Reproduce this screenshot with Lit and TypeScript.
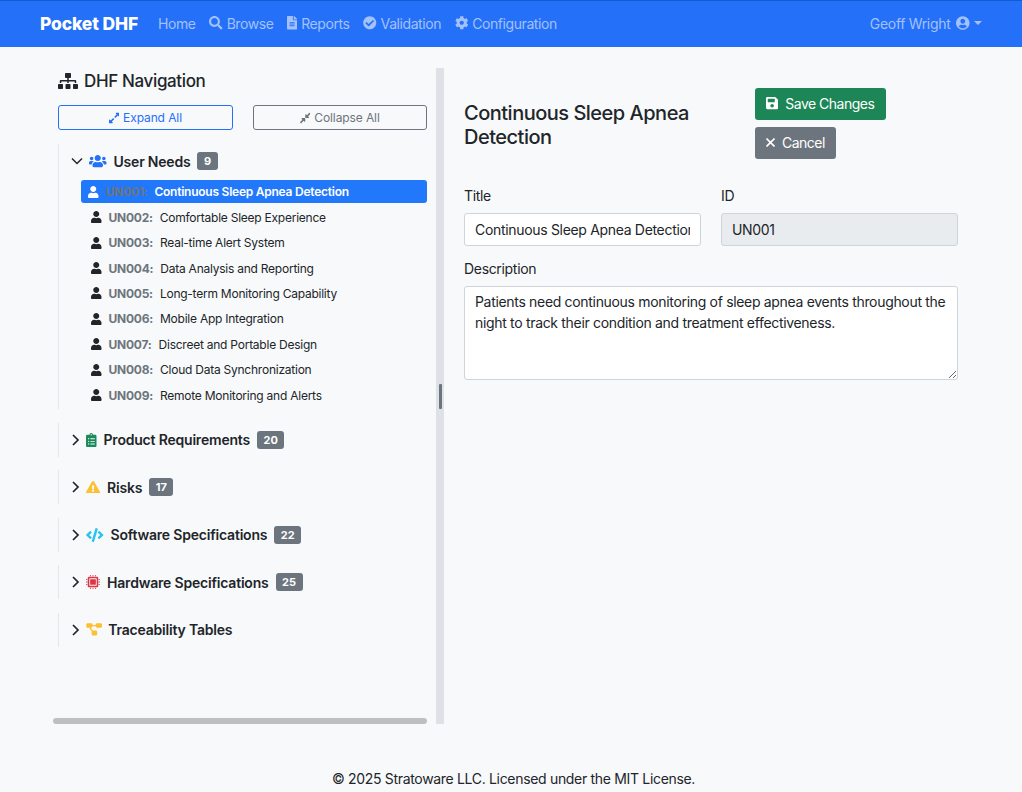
import { LitElement, html, css } from "lit";
import { customElement } from "lit/decorators.js";

type Ic = [number, string];
const I: Record<string, Ic> = {
  search: [512, "M505 442.7L405.3 343c-4.5-4.5-10.6-7-17-7H372c27.6-35.3 44-79.7 44-128C416 93.1 322.9 0 208 0S0 93.1 0 208s93.1 208 208 208c48.3 0 92.7-16.4 128-44v16.3c0 6.4 2.5 12.5 7 17l99.7 99.7c9.4 9.4 24.6 9.4 33.9 0l28.3-28.3c9.4-9.4 9.4-24.6.1-34zM208 336c-70.7 0-128-57.2-128-128 0-70.7 57.2-128 128-128 70.7 0 128 57.2 128 128 0 70.7-57.2 128-128 128z"],
  file: [384, "M224 136V0H24C10.7 0 0 10.7 0 24v464c0 13.3 10.7 24 24 24h336c13.3 0 24-10.7 24-24V160H248c-13.2 0-24-10.8-24-24zm64 236c0 6.6-5.4 12-12 12H108c-6.6 0-12-5.4-12-12v-8c0-6.6 5.4-12 12-12h168c6.6 0 12 5.4 12 12v8zm0-64c0 6.6-5.4 12-12 12H108c-6.6 0-12-5.4-12-12v-8c0-6.6 5.4-12 12-12h168c6.6 0 12 5.4 12 12v8zm0-72v8c0 6.6-5.4 12-12 12H108c-6.6 0-12-5.4-12-12v-8c0-6.6 5.4-12 12-12h168c6.6 0 12 5.4 12 12zm96-114.1v6.1H256V0h6.1c6.4 0 12.5 2.5 17 7l97.9 98c4.5 4.5 7 10.6 7 16.9z"],
  check: [512, "M504 256c0 136.967-111.033 248-248 248S8 392.967 8 256 119.033 8 256 8s248 111.033 248 248zM227.314 387.314l184-184c6.248-6.248 6.248-16.379 0-22.627l-22.627-22.627c-6.248-6.249-16.379-6.249-22.628 0L216 308.118l-70.059-70.059c-6.248-6.248-16.379-6.248-22.628 0l-22.627 22.627c-6.248 6.248-6.248 16.379 0 22.627l104 104c6.249 6.249 16.379 6.249 22.628.001z"],
  cog: [512, "M487.4 315.7l-42.6-24.6c4.3-23.2 4.3-47 0-70.2l42.6-24.6c4.9-2.8 7.1-8.6 5.5-14-11.1-35.6-30-67.8-54.7-94.6-3.8-4.1-10-5.1-14.8-2.3L380.8 110c-17.9-15.4-38.5-27.3-60.8-35.1V25.8c0-5.6-3.9-10.5-9.4-11.7-36.7-8.2-74.3-7.8-109.2 0-5.5 1.2-9.4 6.1-9.4 11.7V75c-22.2 7.9-42.8 19.8-60.8 35.1L88.7 85.5c-4.9-2.8-11-1.9-14.8 2.3-24.7 26.7-43.6 58.9-54.7 94.6-1.7 5.4.6 11.2 5.5 14L67.3 221c-4.3 23.2-4.3 47 0 70.2l-42.6 24.6c-4.9 2.8-7.1 8.6-5.5 14 11.1 35.6 30 67.8 54.7 94.6 3.8 4.1 10 5.1 14.8 2.3l42.6-24.6c17.9 15.4 38.5 27.3 60.8 35.1v49.2c0 5.6 3.9 10.5 9.4 11.7 36.7 8.2 74.3 7.8 109.2 0 5.5-1.2 9.4-6.1 9.4-11.7v-49.2c22.2-7.9 42.8-19.8 60.8-35.1l42.6 24.6c4.9 2.8 11 1.9 14.8-2.3 24.7-26.7 43.6-58.9 54.7-94.6 1.5-5.5-.7-11.3-5.6-14.1zM256 336c-44.1 0-80-35.9-80-80s35.9-80 80-80 80 35.9 80 80-35.9 80-80 80z"],
  usercircle: [496, "M248 8C111 8 0 119 0 256s111 248 248 248 248-111 248-248S385 8 248 8zm0 96c48.6 0 88 39.4 88 88s-39.4 88-88 88-88-39.4-88-88 39.4-88 88-88zm0 344c-58.7 0-111.3-26.6-146.5-68.2 18.8-35.4 55.6-59.8 98.5-59.8 2.4 0 4.8.4 7.1 1.1 13 4.2 26.6 6.9 40.9 6.9 14.3 0 28-2.7 40.9-6.9 2.3-.7 4.7-1.1 7.1-1.1 42.9 0 79.7 24.4 98.5 59.8C359.3 421.4 306.7 448 248 448z"],
  sitemap: [640, "M128 352H32c-17.67 0-32 14.33-32 32v96c0 17.67 14.33 32 32 32h96c17.67 0 32-14.33 32-32v-96c0-17.67-14.33-32-32-32zm-24-80h192v48h48v-48h192v48h48v-57.59c0-21.17-17.23-38.41-38.41-38.41H344v-64h40c17.67 0 32-14.33 32-32V32c0-17.67-14.33-32-32-32H256c-17.67 0-32 14.33-32 32v96c0 17.67 14.33 32 32 32h40v64H94.41C73.23 224 56 241.23 56 262.41V320h48v-48zm264 80h-96c-17.67 0-32 14.33-32 32v96c0 17.67 14.33 32 32 32h96c17.67 0 32-14.33 32-32v-96c0-17.67-14.33-32-32-32zm240 0h-96c-17.67 0-32 14.33-32 32v96c0 17.67 14.33 32 32 32h96c17.67 0 32-14.33 32-32v-96c0-17.67-14.33-32-32-32z"],
  expand: [448, "M212.686 315.314L120 408l32.922 31.029c15.12 15.12 4.412 40.971-16.97 40.971h-112C10.697 480 0 469.255 0 456V344c0-21.382 25.803-32.09 40.922-16.971L72 360l92.686-92.686c6.249-6.248 16.379-6.248 22.627 0l25.373 25.373c6.249 6.248 6.249 16.378 0 22.627zm22.628-118.628L328 104l-32.922-31.029C279.958 57.851 290.666 32 312.048 32h112C437.303 32 448 42.745 448 56v112c0 21.382-25.803 32.09-40.922 16.971L376 152l-92.686 92.686c-6.249 6.248-16.379 6.248-22.627 0l-25.373-25.373c-6.249-6.248-6.249-16.378 0-22.627z"],
  compress: [448, "M4.686 427.314L104 328l-32.922-31.029C55.958 281.851 66.666 256 88.048 256h112C213.303 256 224 266.745 224 280v112c0 21.382-25.803 32.09-40.922 16.971L152 376l-99.314 99.314c-6.248 6.248-16.379 6.248-22.627 0L4.686 449.941c-6.248-6.248-6.248-16.379 0-22.627zM443.314 84.686L344 184l32.922 31.029c15.12 15.12 4.412 40.971-16.97 40.971h-112C234.697 256 224 245.255 224 232V120c0-21.382 25.803-32.09 40.922-16.971L296 136l99.314-99.314c6.248-6.248 16.379-6.248 22.627 0l25.373 25.373c6.248 6.248 6.248 16.379 0 22.627z"],
  users: [640, "M96 224c35.3 0 64-28.7 64-64s-28.7-64-64-64-64 28.7-64 64 28.7 64 64 64zm448 0c35.3 0 64-28.7 64-64s-28.7-64-64-64-64 28.7-64 64 28.7 64 64 64zm32 32h-64c-17.6 0-33.5 7.1-45.1 18.6 40.3 22.1 68.9 62 75.1 109.4h66c17.7 0 32-14.3 32-32v-32c0-35.3-28.7-64-64-64zm-256 0c61.9 0 112-50.1 112-112S381.9 32 320 32 208 82.1 208 144s50.1 112 112 112zm76.8 32h-8.3c-20.8 10-43.9 16-68.5 16s-47.6-6-68.5-16h-8.3C179.6 288 128 339.6 128 403.2V432c0 26.5 21.5 48 48 48h288c26.5 0 48-21.5 48-48v-28.8c0-63.6-51.6-115.2-115.2-115.2zm-223.7-13.4C161.5 263.1 145.6 256 128 256H64c-35.3 0-64 28.7-64 64v32c0 17.7 14.3 32 32 32h65.9c6.3-47.4 34.9-87.3 75.2-109.4z"],
  user: [448, "M224 256c70.7 0 128-57.3 128-128S294.7 0 224 0 96 57.3 96 128s57.3 128 128 128zm89.6 32h-16.7c-22.2 10.2-46.9 16-72.9 16s-50.6-5.8-72.9-16h-16.7C60.2 288 0 348.2 0 422.4V464c0 26.5 21.5 48 48 48h352c26.5 0 48-21.5 48-48v-41.6c0-74.2-60.2-134.4-134.4-134.4z"],
  clipboard: [384, "M336 64h-80c0-35.3-28.7-64-64-64s-64 28.7-64 64H48C21.5 64 0 85.5 0 112v352c0 26.5 21.5 48 48 48h288c26.5 0 48-21.5 48-48V112c0-26.5-21.5-48-48-48zM96 424c-13.3 0-24-10.7-24-24s10.7-24 24-24 24 10.7 24 24-10.7 24-24 24zm0-96c-13.3 0-24-10.7-24-24s10.7-24 24-24 24 10.7 24 24-10.7 24-24 24zm0-96c-13.3 0-24-10.7-24-24s10.7-24 24-24 24 10.7 24 24-10.7 24-24 24zm96-192c13.3 0 24 10.7 24 24s-10.7 24-24 24-24-10.7-24-24 10.7-24 24-24zm128 368c0 4.4-3.6 8-8 8H168c-4.4 0-8-3.6-8-8v-16c0-4.4 3.6-8 8-8h144c4.4 0 8 3.6 8 8v16zm0-96c0 4.4-3.6 8-8 8H168c-4.4 0-8-3.6-8-8v-16c0-4.4 3.6-8 8-8h144c4.4 0 8 3.6 8 8v16zm0-96c0 4.4-3.6 8-8 8H168c-4.4 0-8-3.6-8-8v-16c0-4.4 3.6-8 8-8h144c4.4 0 8 3.6 8 8v16z"],
  warn: [576, "M569.517 440.013C587.975 472.007 564.806 512 527.94 512H48.054c-36.937 0-59.999-40.055-41.577-71.987L246.423 23.985c18.467-32.009 64.72-31.951 83.154 0l239.94 416.028zM288 354c-25.405 0-46 20.595-46 46s20.595 46 46 46 46-20.595 46-46-20.595-46-46-46zm-43.673-165.346l7.418 136c.347 6.364 5.609 11.346 11.982 11.346h48.546c6.373 0 11.635-4.982 11.982-11.346l7.418-136c.375-6.874-5.098-12.654-11.982-12.654h-63.383c-6.884 0-12.356 5.78-11.981 12.654z"],
  code: [640, "M278.9 511.5l-61-17.7c-6.4-1.8-10-8.5-8.2-14.9L346.2 8.7c1.8-6.4 8.5-10 14.9-8.2l61 17.7c6.4 1.8 10 8.5 8.2 14.9L293.8 503.3c-1.9 6.4-8.5 10.1-14.9 8.2zm-114-112.2l43.5-46.4c4.6-4.9 4.3-12.7-.8-17.2L117 256l90.6-79.7c5.1-4.5 5.5-12.3.8-17.2l-43.5-46.4c-4.5-4.8-12.1-5.1-17-.5L3.8 247.2c-5.1 4.7-5.1 12.8 0 17.5l144.1 135.1c4.9 4.6 12.5 4.4 17-.5zm327.2.6l144.1-135.1c5.1-4.7 5.1-12.8 0-17.5L492.1 112.1c-4.8-4.5-12.4-4.3-17 .5L431.6 159c-4.6 4.9-4.3 12.7.8 17.2L523 256l-90.6 79.7c-5.1 4.5-5.5 12.3-.8 17.2l43.5 46.4c4.5 4.9 12.1 5.1 17 .6z"],
  chip: [512, "M112 64h288c26.5 0 48 21.5 48 48v288c0 26.5-21.5 48-48 48H112c-26.5 0-48-21.5-48-48V112c0-26.5 21.5-48 48-48zm28 56c-11 0-20 9-20 20v232c0 11 9 20 20 20h232c11 0 20-9 20-20V140c0-11-9-20-20-20H140zm12 32h208v208H152V152zM144 0h32v48h-32zm96 0h32v48h-32zm96 0h32v48h-32zM144 464h32v48h-32zm96 0h32v48h-32zm96 0h32v48h-32zM0 144h48v32H0zm0 96h48v32H0zm0 96h48v32H0zM464 144h48v32h-48zm0 96h48v32h-48zm0 96h48v32h-48z"],
  diagram: [640, "M70 10h130c35 0 60 25 60 55v10h120v-10c0-30 25-55 60-55h130c35 0 60 25 60 55v65c0 30-25 55-60 55H440c-35 0-60-25-60-55v-5H260v5c0 30-25 55-60 55h-8l66 115h122c35 0 60 25 60 55v85c0 30-25 55-60 55H280c-35 0-60-25-60-55v-85c0-8 2-16 5-23L126 184C100 184 10 190 10 130V65C10 35 35 10 70 10z"],
  save: [448, "M433.941 129.941l-83.882-83.882A48 48 0 0 0 316.118 32H48C21.49 32 0 53.49 0 80v352c0 26.51 21.49 48 48 48h352c26.51 0 48-21.49 48-48V163.882a48 48 0 0 0-14.059-33.941zM224 416c-35.346 0-64-28.654-64-64 0-35.346 28.654-64 64-64s64 28.654 64 64c0 35.346-28.654 64-64 64zm96-304.52V212c0 6.627-5.373 12-12 12H76c-6.627 0-12-5.373-12-12V108c0-6.627 5.373-12 12-12h228.52c3.183 0 6.235 1.264 8.485 3.515l3.48 3.48A11.996 11.996 0 0 1 320 111.48z"],
};

const icon = (name: string, cls = "") => {
  const [w, d] = I[name];
  return html`<svg class="ic ${cls}" viewBox="0 0 ${w} 512" fill="currentColor"><path d=${d}></path></svg>`;
};

const needs: [string, string][] = [
  ["UN001", "Continuous Sleep Apnea Detection"],
  ["UN002", "Comfortable Sleep Experience"],
  ["UN003", "Real-time Alert System"],
  ["UN004", "Data Analysis and Reporting"],
  ["UN005", "Long-term Monitoring Capability"],
  ["UN006", "Mobile App Integration"],
  ["UN007", "Discreet and Portable Design"],
  ["UN008", "Cloud Data Synchronization"],
  ["UN009", "Remote Monitoring and Alerts"],
];

const groups: [string, string, string, string | null][] = [
  ["Product Requirements", "clipboard", "green", "20"],
  ["Risks", "warn", "amber", "17"],
  ["Software Specifications", "code", "cyan", "22"],
  ["Hardware Specifications", "chip", "red", "25"],
  ["Traceability Tables", "diagram", "amber", null],
];

@customElement("app-root")
export class AppRoot extends LitElement {
  static styles = css`
    :host { display: block; min-height: 792px; background: #f8f9fa; color: #212529;
      font-family: Inter, "Noto Sans", sans-serif; font-size: 14px; line-height: 21px; letter-spacing: -0.32px; }
    * { box-sizing: border-box; }
    .ic { height: 14px; width: auto; flex: none; display: block; }
    .warn { height: 12.5px; }
    .diagram { height: 13px; margin-right: -1px; }

    nav { height: 47px; background: #2470f9; border-top: 1px solid #0f5bd6; display: flex; align-items: center;
      padding: 0 40px 2px; color: #a3c1fb; }
    .brand { color: #fff; font-weight: 800; font-size: 17.5px; margin-right: 20px; letter-spacing: -0.15px; }
    .links { display: flex; align-items: center; gap: 13.6px; letter-spacing: -0.42px; }
    .link { display: flex; align-items: center; gap: 4px; }
    .link .ic { height: 13.5px; }
    .user { margin-left: auto; display: flex; align-items: center; gap: 6px; }
    .user .ic { height: 14px; }
    .caret { width: 0; height: 0; border: 4px solid transparent; border-top-color: currentColor; border-bottom: 0; margin-left: -2px; }

    main { display: flex; padding: 21px 64px 0 53px; height: 677px; }
    .side { width: 383px; flex: none; height: 656px; padding: 1px 9px 0 5px; display: flex; flex-direction: column; }
    h2 { margin: 0 0 12px; font-size: 17px; line-height: 24px; font-weight: 500; display: flex; align-items: center; gap: 6px; letter-spacing: -0.36px; }
    h2 .ic { height: 16px; }
    .tools { display: flex; gap: 20px; margin-bottom: 14px; }
    .tool { flex: 1; height: 25px; border: 1px solid; border-radius: 3px; font-size: 12px; display: flex;
      align-items: center; justify-content: center; gap: 4px; letter-spacing: -0.1px; }
    .tool .ic { height: 12px; }
    .tool.p { color: #2470f9; border-color: #2470f9; }
    .tool.s { color: #6c757d; border-color: #6c757d; }

    .group { border-left: 1px solid #e3e6ea; margin-bottom: 13.6px; }
    .head { height: 34px; display: flex; align-items: center; padding-left: 12px; font-weight: 600; gap: 7px; color: #212529; letter-spacing: -0.2px; }
    .chev { width: 12px; height: 12px; flex: none; fill: none; stroke: #212529; stroke-width: 1.5; margin-right: -1px; }
    .chev.closed { width: 9px; margin-right: -1px; stroke-width: 1.7; }
    .blue { color: #2470f9; } .green { color: #1c8a5b; } .amber { color: #fcc030; } .cyan { color: #28c3f0; } .red { color: #dc3545; }
    .badge { background: #6c757d; color: #fff; font-size: 11px; font-weight: 700; line-height: 18px; height: 18px;
      padding: 0 6.5px; border-radius: 3px; letter-spacing: 0; }

    ul { list-style: none; margin: 2.3px 0 0.3px; padding: 0 0 0 22px; }
    li { height: 23px; margin-bottom: 2.42px; display: flex; align-items: center; padding-left: 10px; font-size: 12px; border-radius: 3px; letter-spacing: -0.24px; }
    li .ic { height: 12px; margin-right: 7px; }
    li b { color: #6c757d; font-weight: 700; margin-right: 7px; }
    li.active { background: #2278fb; color: #fff; font-weight: 600; padding-left: 7px; }
    li.active b { color: #6c757d; }

    .hbar { margin-top: auto; height: 6px; width: 374px; margin-left: -5px; border-radius: 3px; background: #bfbfbf; }

    .resizer { width: 8px; height: 656px; flex: none; background: #dee2e6; display: flex; align-items: center; justify-content: center; }
    .grip { width: 3px; height: 25px; background: #6c757d; border-radius: 1px; }

    .content { flex: 1; padding: 20px 0 0 20px; }
    .top { display: flex; gap: 20px; }
    h1 { margin: 13px 0 0; flex: none; width: 271px; font-size: 20px; line-height: 24px; font-weight: 500; letter-spacing: -0.5px; }
    .actions { display: flex; flex-direction: column; align-items: flex-start; gap: 7px; }
    .btn { height: 32px; border-radius: 3px; color: #fff; display: flex; align-items: center; gap: 7px; padding: 0 12px 2px 11px; letter-spacing: -0.5px; }
    .btn .ic { height: 14px; }
    .btn.save { background: #1d8656; }
    .btn.cancel { background: #6c757d; padding-right: 11px; }
    .x { width: 9px; height: 9px; flex: none; fill: none; stroke: #fff; stroke-width: 1.6; }

    .row { display: grid; grid-template-columns: 1fr 1fr; gap: 20px; margin-top: 26px; }
    label { display: block; margin-bottom: 7px; }
    input, textarea { display: block; width: 100%; font: inherit; letter-spacing: inherit; color: #212529; background: #fff; border: 1px solid #ced4da;
      border-radius: 3px; padding: 5px 10px; outline: none; }
    input { height: 33px; }
    input[disabled] { background: #e9ecef; color: #212529; }
    .desc { margin-top: 12px; }
    textarea { height: 94px; padding-top: 4px; resize: vertical; }

    footer { text-align: center; font-size: 14px; margin-top: 44px; padding-left: 5px; }
  `;

  render() {
    return html`
      <nav>
        <span class="brand">Pocket DHF</span>
        <div class="links">
          <span class="link">Home</span>
          <span class="link">${icon("search")}Browse</span>
          <span class="link">${icon("file")}Reports</span>
          <span class="link">${icon("check")}Validation</span>
          <span class="link">${icon("cog")}Configuration</span>
        </div>
        <div class="user">Geoff Wright ${icon("usercircle")}<span class="caret"></span></div>
      </nav>
      <main>
        <aside class="side">
          <h2>${icon("sitemap")}DHF Navigation</h2>
          <div class="tools">
            <div class="tool p">${icon("expand")}Expand All</div>
            <div class="tool s">${icon("compress")}Collapse All</div>
          </div>
          <div class="group">
            <div class="head">
              <svg class="chev" viewBox="0 0 12 12"><path d="M1 3.5l5 5 5-5"></path></svg>
              <span class="blue">${icon("users")}</span>User Needs<span class="badge">9</span>
            </div>
            <ul>
              ${needs.map(([id, t], i) => html`<li class=${i === 0 ? "active" : ""}>${icon("user")}<b>${id}:</b>${t}</li>`)}
            </ul>
          </div>
          ${groups.map(([t, ic, col, n]) => html`
            <div class="group">
              <div class="head">
                <svg class="chev closed" viewBox="0 0 9 12"><path d="M2 1l5 5-5 5"></path></svg>
                <span class=${col}>${icon(ic, ic)}</span>${t}${n ? html`<span class="badge">${n}</span>` : ""}
              </div>
            </div>`)}
          <div class="hbar"></div>
        </aside>
        <div class="resizer"><div class="grip"></div></div>
        <section class="content">
          <div class="top">
            <h1>Continuous Sleep Apnea Detection</h1>
            <div class="actions">
              <div class="btn save">${icon("save")}Save Changes</div>
              <div class="btn cancel"><svg class="x" viewBox="0 0 9 9"><path d="M.5.5l8 8M8.5.5l-8 8"></path></svg>Cancel</div>
            </div>
          </div>
          <div class="row">
            <div><label>Title</label><input value="Continuous Sleep Apnea Detection" /></div>
            <div><label>ID</label><input value="UN001" disabled /></div>
          </div>
          <div class="desc">
            <label>Description</label>
            <textarea .value=${"Patients need continuous monitoring of sleep apnea events throughout the night to track their condition and treatment effectiveness."}></textarea>
          </div>
        </section>
      </main>
      <footer>© 2025 Stratoware LLC. Licensed under the MIT License.</footer>
    `;
  }
}
